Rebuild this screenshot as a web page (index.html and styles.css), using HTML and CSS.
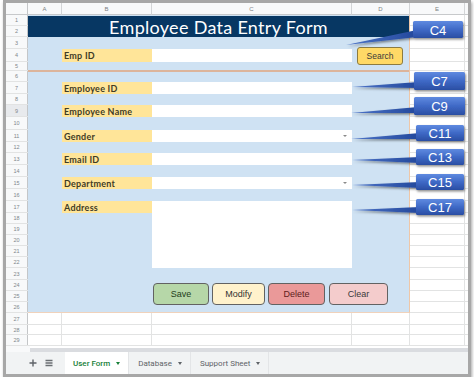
FILE: index.html
```html
<!DOCTYPE html>
<html lang="en">
<head>
<meta charset="utf-8">
<title>Employee Data Entry Form</title>
<link rel="stylesheet" href="styles.css">
</head>
<body>
<div class="frame">
  <div class="colhead">
    <div class="ch corner"></div>
    <div class="ch ca">A</div>
    <div class="ch cb">B</div>
    <div class="ch cc">C</div>
    <div class="ch cd">D</div>
    <div class="ch ce">E</div>
    <div class="ch cf"></div>
  </div>
  <div class="sheet">
    <div class="rows">
      <div class="row"><span class="rn">1</span></div>
      <div class="row"><span class="rn">2</span></div>
      <div class="row"><span class="rn">3</span></div>
      <div class="row"><span class="rn">4</span></div>
      <div class="row"><span class="rn">5</span></div>
      <div class="row"><span class="rn">6</span></div>
      <div class="row"><span class="rn">7</span></div>
      <div class="row"><span class="rn">8</span></div>
      <div class="row"><span class="rn sel">9</span></div>
      <div class="row"><span class="rn">10</span></div>
      <div class="row"><span class="rn">11</span></div>
      <div class="row"><span class="rn">12</span></div>
      <div class="row"><span class="rn">13</span></div>
      <div class="row"><span class="rn">14</span></div>
      <div class="row"><span class="rn">15</span></div>
      <div class="row"><span class="rn">16</span></div>
      <div class="row"><span class="rn">17</span></div>
      <div class="row"><span class="rn">18</span></div>
      <div class="row"><span class="rn">19</span></div>
      <div class="row"><span class="rn">20</span></div>
      <div class="row"><span class="rn">21</span></div>
      <div class="row"><span class="rn">22</span></div>
      <div class="row"><span class="rn">23</span></div>
      <div class="row"><span class="rn">24</span></div>
      <div class="row"><span class="rn">25</span></div>
      <div class="row"><span class="rn">26</span></div>
      <div class="row"><span class="rn">27</span></div>
      <div class="row"><span class="rn">28</span></div>
      <div class="row"><span class="rn">29</span></div>
    </div>
    <div class="form">
      <div class="panel"></div>
      <div class="title">Employee Data Entry Form</div>
      <div class="sep"></div>

      <div class="lbl r4">Emp ID</div><div class="inp r4"></div>
      <button class="search">Search</button>

      <div class="lbl r7">Employee ID</div><div class="inp r7"></div>
      <div class="lbl r9">Employee Name</div><div class="inp r9"></div>
      <div class="lbl r11">Gender</div><div class="inp dd r11"><span class="ddarrow"></span></div>
      <div class="lbl r13">Email ID</div><div class="inp r13"></div>
      <div class="lbl r15">Department</div><div class="inp dd r15"><span class="ddarrow"></span></div>
      <div class="lbl r17">Address</div><div class="inp addr"></div>

      <div class="btns">
        <button class="btn save">Save</button>
        <button class="btn modify">Modify</button>
        <button class="btn delete">Delete</button>
        <button class="btn clear">Clear</button>
      </div>
    </div>
    <svg class="callouts" width="462" height="331" viewBox="0 0 462 331">
      <defs>
        <linearGradient id="boxg" x1="0" y1="0" x2="0" y2="1">
          <stop offset="0" stop-color="#5f8ae0"/>
          <stop offset="0.5" stop-color="#3f69c6"/>
          <stop offset="1" stop-color="#2a4ea3"/>
        </linearGradient>
        <linearGradient id="wedg" x1="0" y1="0" x2="1" y2="0">
          <stop offset="0" stop-color="#4d74c8"/>
          <stop offset="1" stop-color="#23489c"/>
        </linearGradient>
        <filter id="sh" x="-20%" y="-30%" width="150%" height="180%">
          <feDropShadow dx="1" dy="1.5" stdDeviation="1" flood-color="#000" flood-opacity="0.45"/>
        </filter>
      </defs>
      <g filter="url(#sh)">
        <polygon points="340,30 411,15 411,22" fill="url(#wedg)"/>
        <rect x="407" y="6" width="50" height="17" rx="1.5" fill="url(#boxg)"/>
        <polygon points="346,72 412,67 412,73" fill="url(#wedg)"/>
        <rect x="408" y="57" width="51" height="18" rx="1.5" fill="url(#boxg)"/>
        <polygon points="345,98 412,92 412,98" fill="url(#wedg)"/>
        <rect x="408" y="82" width="51" height="18" rx="1.5" fill="url(#boxg)"/>
        <polygon points="345,124 414,118 414,124" fill="url(#wedg)"/>
        <rect x="410" y="110" width="48" height="16" rx="1.5" fill="url(#boxg)"/>
        <polygon points="346,145 414,142 414,148" fill="url(#wedg)"/>
        <rect x="410" y="134" width="48" height="16" rx="1.5" fill="url(#boxg)"/>
        <polygon points="346,170 414,167 414,173" fill="url(#wedg)"/>
        <rect x="410" y="159" width="48" height="16" rx="1.5" fill="url(#boxg)"/>
        <polygon points="346,195 414,192 414,198" fill="url(#wedg)"/>
        <rect x="410" y="184" width="48" height="16" rx="1.5" fill="url(#boxg)"/>
      </g>
      <g class="ctext">
        <text x="432" y="19.5">C4</text>
        <text x="433.5" y="71">C7</text>
        <text x="433.5" y="96">C9</text>
        <text x="434" y="123">C11</text>
        <text x="434" y="147">C13</text>
        <text x="434" y="172">C15</text>
        <text x="434" y="197">C17</text>
      </g>
    </svg>
  </div>
  <div class="hscroll"><div class="hgap"></div><div class="hbar"></div></div>
  <div class="tabs">
    <div class="tbicon">
      <svg width="8" height="8" viewBox="0 0 8 8"><path d="M4 0.5V7.5M0.5 4H7.5" stroke="#5f6368" stroke-width="1.4"/></svg>
    </div>
    <div class="tbicon">
      <svg width="8" height="8" viewBox="0 0 8 8"><path d="M0.5 1.5H7.5M0.5 4H7.5M0.5 6.5H7.5" stroke="#6b6f73" stroke-width="1.5"/></svg>
    </div>
    <div class="tab active"><span>User Form</span><span class="caret"></span></div>
    <div class="tab"><span>Database</span><span class="caret"></span></div>
    <div class="tab"><span>Support Sheet</span><span class="caret"></span></div>
  </div>
</div>
</body>
</html>
```
FILE: styles.css
```css
html, body {
  margin: 0;
  padding: 0;
  background: #ffffff;
}
body {
  font-family: "Liberation Sans", Arial, sans-serif;
}
.frame {
  margin-left: 3px;
  width: 468px;
  height: 377px;
  box-sizing: border-box;
  border: 3px solid #a7a7a7;
  box-shadow: 1px 2px 3px rgba(0, 0, 0, 0.35);
  background: #ffffff;
  display: flex;
  flex-direction: column;
  overflow: hidden;
}
.colhead {
  display: flex;
  height: 12px;
  flex: none;
}
.ch {
  box-sizing: border-box;
  height: 12px;
  background: #f8f9fa;
  border-right: 1px solid #d3d5d7;
  border-bottom: 1px solid #c7c9cb;
  font-size: 6px;
  color: #7b7f83;
  display: flex;
  align-items: center;
  justify-content: center;
}
.corner { width: 22px; border-right-color: #c4c6c8; }
.ca { width: 34px; }
.cb { width: 90px; }
.cc { width: 200px; }
.cd { width: 58px; }
.ce { width: 55px; }
.cf { flex: 1; border-right: 0; }

.sheet {
  --rows: 11px 11px 12px 13px 9px 11px 12px 11px 12px 13px 12px 11px 12px 12px 12px 12px 12px 11px 11px 11px 11px 11px 12px 11px 11px 11px 12px 10px 11px;
  display: grid;
  height: 331px;
  flex: none;
}
.rows, .form, .callouts {
  grid-area: 1 / 1;
}
.rows {
  display: grid;
  grid-template-rows: var(--rows);
  background-image:
    linear-gradient(#e2e3e3, #e2e3e3),
    linear-gradient(#e2e3e3, #e2e3e3),
    linear-gradient(#e2e3e3, #e2e3e3),
    linear-gradient(#e2e3e3, #e2e3e3),
    linear-gradient(#e2e3e3, #e2e3e3);
  background-position: 55px 0, 145px 0, 345px 0, 403px 0, 458px 0;
  background-size: 1px 100%;
  background-repeat: no-repeat;
}
.row {
  display: flex;
  box-sizing: border-box;
  border-bottom: 1px solid #e2e3e3;
  min-height: 0;
}
.rn {
  width: 22px;
  box-sizing: border-box;
  background: #f8f9fa;
  border-right: 1px solid #c4c6c8;
  font-size: 5.5px;
  color: #80868b;
  display: flex;
  align-items: center;
  justify-content: center;
}
.rn.sel {
  background: #e8eaed;
}

.form {
  display: grid;
  grid-template-columns: 22px 34px 90px 200px 58px 55px 1fr;
  grid-template-rows: var(--rows);
}
.panel {
  grid-column: 2 / 6;
  grid-row: 1 / 27;
  background: #cfe2f3;
  border-right: 1px solid #eec7a8;
  border-bottom: 1px solid #f0d2bb;
}
.title {
  grid-column: 2 / 6;
  grid-row: 1 / 3;
  margin-top: 1px;
  margin-right: 1px;
  background: #073763;
  color: #ffffff;
  font-family: "Lato", "Noto Sans", sans-serif;
  font-size: 18px;
  letter-spacing: 0.3px;
  display: flex;
  align-items: center;
  justify-content: center;
  padding-top: 1px;
}
.sep {
  grid-column: 2 / 6;
  grid-row: 5;
  align-self: end;
  height: 2px;
  margin-bottom: -1px;
  margin-right: 1px;
  background: #dcb49b;
}
.lbl {
  grid-column: 3;
  background: #ffe599;
  color: #3f3c25;
  font-family: "Lato", "Noto Sans", sans-serif;
  font-weight: 700;
  font-size: 9px;
  letter-spacing: 0.25px;
  display: flex;
  align-items: center;
  padding-left: 2px;
}
.inp {
  grid-column: 4;
  background: #ffffff;
}
.r4 { grid-row: 4; }
.r7 { grid-row: 7; }
.r9 { grid-row: 9; }
.r11 { grid-row: 11; }
.r13 { grid-row: 13; }
.r15 { grid-row: 15; }
.r17 { grid-row: 17; }
.addr { grid-row: 17 / 23; }
.dd {
  display: flex;
  align-items: center;
  justify-content: flex-end;
  padding-right: 5px;
}
.ddarrow {
  width: 0;
  height: 0;
  border-left: 2px solid transparent;
  border-right: 2px solid transparent;
  border-top: 2px solid #8a8a8a;
}
.search {
  grid-column: 5;
  grid-row: 3 / 6;
  align-self: start;
  justify-self: start;
  margin: 10px 0 0 5px;
  width: 46px;
  height: 18px;
  padding: 0;
  background: #ffd966;
  border: 1px solid #8c7b40;
  border-radius: 3px;
  font-family: "Liberation Sans", Arial, sans-serif;
  font-size: 8.5px;
  color: #3a3a3a;
}
.btns {
  grid-column: 4 / 6;
  grid-row: 24 / 26;
  display: flex;
  align-items: flex-start;
  gap: 3px;
  padding: 3px 0 0 1px;
  min-height: 0;
}
.btn {
  flex: none;
  height: 22px;
  padding: 0;
  border: 1px solid #626262;
  border-radius: 4px;
  font-family: "Liberation Sans", Arial, sans-serif;
  font-size: 9px;
}
.save { width: 56px; background: #b6d7a8; color: #22401a; }
.modify { width: 53px; background: #fff2cc; color: #333333; }
.delete { width: 57px; background: #ea9999; color: #5e1c1c; }
.clear { width: 59px; margin-left: 1px; background: #f4cccc; color: #3a3a3a; }

.callouts {
  pointer-events: none;
  overflow: visible;
}
.ctext text {
  fill: #ffffff;
  font-family: "Liberation Sans", Arial, sans-serif;
  font-size: 13px;
  text-anchor: middle;
}

.hscroll {
  height: 6px;
  flex: none;
  display: flex;
}
.hgap {
  width: 24px;
  background: #f8f9fa;
}
.hbar {
  flex: 1;
  margin-top: 2px;
  background: #dadce0;
}
.tabs {
  flex: 1;
  display: flex;
  align-items: stretch;
  background: #f1f3f4;
  padding-left: 19px;
  font-family: "Roboto", "Liberation Sans", sans-serif;
  font-size: 8px;
  color: #5f6368;
}
.tbicon {
  width: 16px;
  display: flex;
  align-items: center;
  justify-content: center;
}
.tab {
  display: flex;
  align-items: center;
  gap: 6px;
  padding: 0 8px 0 9px;
  border-right: 1px solid #e3e5e7;
}
.tab.active {
  margin-left: 8px;
  padding-left: 8px;
  background: #ffffff;
  color: #188038;
  font-weight: 500;
}
.caret {
  width: 0;
  height: 0;
  border-left: 2.5px solid transparent;
  border-right: 2.5px solid transparent;
  border-top: 3px solid currentColor;
}
```
